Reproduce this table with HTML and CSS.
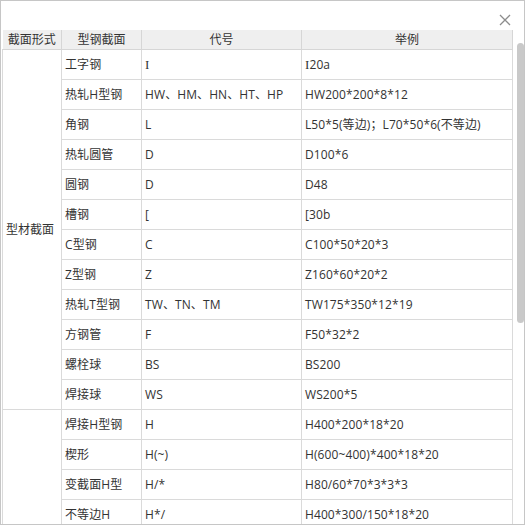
FILE: index.html
```html
<!DOCTYPE html>
<html lang="zh">
<head>
<meta charset="utf-8">
<link rel="stylesheet" href="styles.css">
</head>
<body>
<div class="dialog">
  <div class="titlebar">
    <svg class="close" width="12" height="12" viewBox="0 0 12 12"><path d="M1 1L11 11M11 1L1 11" stroke="#8c8c8c" stroke-width="1.3" fill="none"/></svg>
  </div>
  <div class="content">
    <div class="table-wrap">
      <table class="grid">
        <colgroup><col class="c1"><col class="c2"><col class="c3"><col class="c4"></colgroup>
        <thead>
          <tr><th>截面形式</th><th>型钢截面</th><th>代号</th><th>举例</th></tr>
        </thead>
        <tbody>
          <tr><td class="group" rowspan="12">型材截面</td><td>工字钢</td><td><span class="serif-i">I</span></td><td><span class="serif-i">I</span>20a</td></tr>
          <tr><td>热轧H型钢</td><td>HW、HM、HN、HT、HP</td><td>HW200*200*8*12</td></tr>
          <tr><td>角钢</td><td>L</td><td>L50*5(等边)；L70*50*6(不等边)</td></tr>
          <tr><td>热轧圆管</td><td>D</td><td>D100*6</td></tr>
          <tr><td>圆钢</td><td>D</td><td>D48</td></tr>
          <tr><td>槽钢</td><td>[</td><td>[30b</td></tr>
          <tr><td>C型钢</td><td>C</td><td>C100*50*20*3</td></tr>
          <tr><td>Z型钢</td><td>Z</td><td>Z160*60*20*2</td></tr>
          <tr><td>热轧T型钢</td><td>TW、TN、TM</td><td>TW175*350*12*19</td></tr>
          <tr><td>方钢管</td><td>F</td><td>F50*32*2</td></tr>
          <tr><td>螺栓球</td><td>BS</td><td>BS200</td></tr>
          <tr><td>焊接球</td><td>WS</td><td>WS200*5</td></tr>
          <tr><td class="group" rowspan="4"></td><td>焊接H型钢</td><td>H</td><td>H400*200*18*20</td></tr>
          <tr><td>楔形</td><td>H(~)</td><td>H(600~400)*400*18*20</td></tr>
          <tr><td>变截面H型</td><td>H/*</td><td>H80/60*70*3*3*3</td></tr>
          <tr><td>不等边H</td><td>H*/</td><td>H400*300/150*18*20</td></tr>
        </tbody>
      </table>
    </div>
    <div class="scrollbar"><div class="thumb"></div></div>
  </div>
</div>
</body>
</html>
```
FILE: styles.css
```css
html, body {
  margin: 0;
  padding: 0;
  background: #ffffff;
}
.dialog {
  width: 525px;
  height: 525px;
  box-sizing: border-box;
  border: 1px solid #c6c6c6;
  background: #ffffff;
  display: flex;
  flex-direction: column;
  overflow: hidden;
  font-family: "Open Sans", "Noto Sans CJK SC", sans-serif;
  font-size: 12px;
  color: #333333;
}
.titlebar {
  height: 29px;
  flex: none;
  display: flex;
  justify-content: flex-end;
  align-items: flex-start;
  padding-right: 13px;
}
.close {
  margin-top: 13px;
  display: block;
}
.content {
  display: flex;
  padding-left: 1px;
  flex: none;
}
.table-wrap {
  width: 511px;
  flex: none;
}
.grid {
  border-collapse: collapse;
  table-layout: fixed;
  width: 511px;
}
.c1 { width: 59px; }
.c2 { width: 80px; }
.c3 { width: 160px; }
.c4 { width: 211px; }
.grid th {
  background: #efefef;
  font-weight: normal;
  height: 19px;
  padding: 0;
  text-align: center;
  border-left: 1px solid #d6d6d6;
  border-right: 1px solid #d6d6d6;
  border-bottom: 1px solid #d6d6d6;
  line-height: 19px;
  white-space: nowrap;
}
.grid th:first-child { border-left: none; }
.grid td {
  height: 29px;
  padding: 0 0 0 3px;
  border: 1px solid #dadada;
  line-height: 16px;
  white-space: nowrap;
  vertical-align: middle;
  letter-spacing: 0.1px;
}
.grid td.group {
  padding-left: 3px;
  letter-spacing: 0;
}
.serif-i {
  font-family: "Liberation Serif", serif;
  font-size: 13px;
}
.scrollbar {
  width: 11px;
  flex: none;
  position: relative;
}
.thumb {
  width: 7px;
  height: 280px;
  margin-top: 13px;
  margin-left: 4px;
  background: #c9c9c9;
  border-radius: 4px;
}
```
